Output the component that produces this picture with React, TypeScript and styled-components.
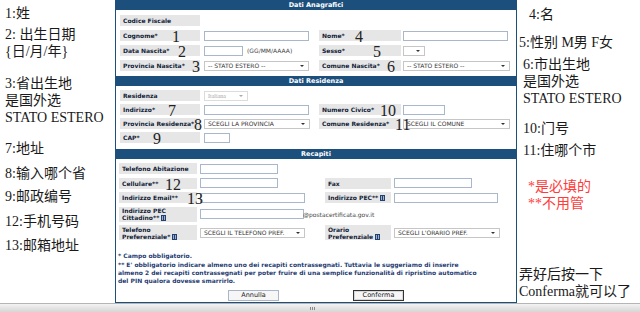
import React from "react";
import styled, { createGlobalStyle } from "styled-components";

const NAVY = "#1d4f7c";

const GlobalStyle = createGlobalStyle`
  html, body { margin: 0; padding: 0; background: #fff; }
  body { width: 640px; height: 312px; overflow: hidden; }
  #root { width: 640px; height: 312px; }
`;

const Page = styled.div`
  width: 640px;
  height: 312px;
  display: flex;
  flex-direction: column;
`;

const Main = styled.div`
  display: flex;
  height: 303px;
`;

const NotesColumn = styled.div<{ $w: number }>`
  width: ${(p) => p.$w}px;
  flex: none;
  font-family: "Liberation Serif", "Noto Sans CJK SC", serif;
  font-size: 14px;
  line-height: 17px;
  white-space: nowrap;
  overflow: hidden;
`;

const Note = styled.div<{ $mt: number; $indent: number; $red?: boolean }>`
  margin-top: ${(p) => p.$mt}px;
  padding-left: ${(p) => p.$indent}px;
  color: ${(p) => (p.$red ? "#ff3b3b" : "#1a1a1a")};
`;

const Frame = styled.div`
  width: 402px;
  flex: none;
  box-sizing: border-box;
  border: 1px solid ${NAVY};
  border-top: none;
  display: flex;
  flex-direction: column;
  font-family: "DejaVu Sans", Verdana, sans-serif;
  font-size: 6px;
`;

const SectionHeader = styled.div`
  height: 10px;
  background: ${NAVY};
  color: #fff;
  font-weight: bold;
  text-align: center;
  line-height: 10px;
  font-size: 6.5px;
`;

const SectionBody = styled.div<{ $pt: number; $pb: number; $pl: number; $gap: number }>`
  display: flex;
  flex-direction: column;
  gap: ${(p) => p.$gap}px;
  padding: ${(p) => p.$pt}px 0 ${(p) => p.$pb}px ${(p) => p.$pl}px;
`;

const Row = styled.div<{ $h: number }>`
  display: flex;
  height: ${(p) => p.$h}px;
`;

const Half = styled.div<{ $w?: number; $gap: number }>`
  display: flex;
  align-items: center;
  gap: ${(p) => p.$gap}px;
  flex: none;
  width: ${(p) => (p.$w ? `${p.$w}px` : "auto")};
`;

const Label = styled.div<{ $w: number }>`
  position: relative;
  align-self: stretch;
  width: ${(p) => p.$w}px;
  flex: none;
  box-sizing: border-box;
  background: #e6e6e6;
  padding-left: 3px;
  display: flex;
  flex-direction: column;
  justify-content: center;
  font-weight: bold;
  color: #121d38;
  line-height: 7px;
  white-space: nowrap;
`;

const Num = styled.span<{ $left: number }>`
  position: absolute;
  left: ${(p) => p.$left}px;
  top: -1px;
  font-family: "Liberation Serif", serif;
  font-weight: normal;
  font-size: 16px;
  line-height: 16px;
  color: #222;
`;

const InfoBox = styled.span`
  display: inline-block;
  box-sizing: border-box;
  width: 5px;
  height: 6px;
  margin-left: 2px;
  vertical-align: -1px;
  border: 1px solid #23406e;
  background: linear-gradient(90deg, #9db0cf 0 40%, #23406e 40% 60%, #9db0cf 60%);
`;

const TextBox = styled.input<{ $w: number }>`
  box-sizing: border-box;
  width: ${(p) => p.$w}px;
  height: 10px;
  margin: 0;
  padding: 0;
  border: 1px solid #a9b7ca;
  background: #fff;
  font-size: 6px;
  flex: none;
  outline: none;
`;

const SelectBox = styled.div<{ $w: number; $disabled?: boolean }>`
  box-sizing: border-box;
  width: ${(p) => p.$w}px;
  height: 10px;
  flex: none;
  border: 1px solid ${(p) => (p.$disabled ? "#dcdcdc" : "#c6c6c6")};
  background: #fff;
  display: flex;
  align-items: center;
  justify-content: space-between;
  padding: 0 4px 0 3px;
  font-size: 6px;
  color: ${(p) => (p.$disabled ? "#a8a8a8" : "#333")};
  font-family: ${(p) => (p.$disabled ? `"Liberation Serif", serif` : `"DejaVu Sans", sans-serif`)};
  white-space: nowrap;
`;

const Arrow = styled.span<{ $disabled?: boolean }>`
  width: 0;
  height: 0;
  border-left: 2px solid transparent;
  border-right: 2px solid transparent;
  border-top: 2px solid ${(p) => (p.$disabled ? "#aaa" : "#333")};
`;

const FieldGroup = styled.div`
  display: flex;
  align-items: center;
  white-space: nowrap;
`;

const Hint = styled.span<{ $ml: number }>`
  margin-left: ${(p) => p.$ml}px;
  color: #444;
  font-size: 6px;
`;

const FootNotes = styled.div`
  padding-left: 2px;
  color: #1f3d73;
  font-weight: bold;
  font-size: 6px;
  line-height: 8px;
  white-space: nowrap;
`;

const FootLine = styled.div<{ $mt: number }>`
  margin-top: ${(p) => p.$mt}px;
`;

const ButtonRow = styled.div`
  display: flex;
  justify-content: center;
  gap: 74px;
  margin-top: 5px;
`;

const Button = styled.button<{ $primary?: boolean }>`
  width: 51px;
  height: 11px;
  box-sizing: border-box;
  padding: 0;
  margin: 0;
  border: 1px solid ${(p) => (p.$primary ? "#333" : "#a7b6c9")};
  box-shadow: ${(p) => (p.$primary ? "inset 0 0 0 1px #d8d8d8" : "none")};
  background: #f6f6f6;
  font-family: "DejaVu Sans", sans-serif;
  font-size: 6.5px;
  line-height: 9px;
  color: #222;
`;

const HScroll = styled.div`
  height: 9px;
  box-sizing: border-box;
  border-top: 1px solid #b5b5b5;
  background: linear-gradient(#f3f3f3, #d6d6d6);
  display: flex;
  justify-content: center;
  align-items: center;
  padding-right: 16px;
`;

const Grip = styled.div`
  width: 5px;
  height: 3px;
  background: repeating-linear-gradient(90deg, #8a8a8a 0 1px, transparent 1px 2px);
`;

const Select = ({ w, text, disabled }: { w: number; text?: string; disabled?: boolean }) => (
  <SelectBox $w={w} $disabled={disabled}>
    <span>{text}</span>
    <Arrow $disabled={disabled} />
  </SelectBox>
);

export default function App() {
  return (
    <Page>
      <GlobalStyle />
      <Main>
        <NotesColumn $w={115}>
          <Note $mt={4.5} $indent={5}>1:姓</Note>
          <Note $mt={4} $indent={5}>
            2: 出生日期
            <br />
            {"{日/月/年}"}
          </Note>
          <Note $mt={15} $indent={5}>
            3:省出生地
            <br />
            是国外选
            <br />
            STATO ESTERO
          </Note>
          <Note $mt={14} $indent={5}>7:地址</Note>
          <Note $mt={8} $indent={5}>8:输入哪个省</Note>
          <Note $mt={6} $indent={5}>9:邮政编号</Note>
          <Note $mt={8} $indent={5}>12:手机号码</Note>
          <Note $mt={7} $indent={5}>13:邮箱地址</Note>
        </NotesColumn>

        <Frame>
          <SectionHeader>Dati Anagrafici</SectionHeader>
          <SectionBody $pt={5} $pb={5} $pl={4} $gap={4}>
            <Row $h={11}>
              <Half $w={199} $gap={4}>
                <Label $w={80}>Codice Fiscale</Label>
              </Half>
            </Row>
            <Row $h={11}>
              <Half $w={199} $gap={4}>
                <Label $w={80}>
                  Cognome*<Num $left={52}>1</Num>
                </Label>
                <TextBox $w={105} />
              </Half>
              <Half $gap={2}>
                <Label $w={82}>
                  Nome*<Num $left={36}>4</Num>
                </Label>
                <TextBox $w={105} />
              </Half>
            </Row>
            <Row $h={11}>
              <Half $w={199} $gap={4}>
                <Label $w={80}>
                  Data Nascita*<Num $left={58}>2</Num>
                </Label>
                <FieldGroup>
                  <TextBox $w={39} />
                  <Hint $ml={4}>(GG/MM/AAAA)</Hint>
                </FieldGroup>
              </Half>
              <Half $gap={2}>
                <Label $w={82}>
                  Sesso*<Num $left={54}>5</Num>
                </Label>
                <Select w={22} />
              </Half>
            </Row>
            <Row $h={11}>
              <Half $w={199} $gap={4}>
                <Label $w={80}>
                  Provincia Nascita*<Num $left={72}>3</Num>
                </Label>
                <Select w={105} text="-- STATO ESTERO --" />
              </Half>
              <Half $gap={2}>
                <Label $w={82}>
                  Comune Nascita*<Num $left={68}>6</Num>
                </Label>
                <Select w={107} text="-- STATO ESTERO --" />
              </Half>
            </Row>
          </SectionBody>

          <SectionHeader>Dati Residenza</SectionHeader>
          <SectionBody $pt={4} $pb={6} $pl={4} $gap={3}>
            <Row $h={11}>
              <Half $w={199} $gap={4}>
                <Label $w={80}>Residenza</Label>
                <Select w={44} text="Italiana" disabled />
              </Half>
            </Row>
            <Row $h={11}>
              <Half $w={199} $gap={4}>
                <Label $w={80}>
                  Indirizzo*<Num $left={48}>7</Num>
                </Label>
                <TextBox $w={105} />
              </Half>
              <Half $gap={2}>
                <Label $w={82}>
                  Numero Civico*<Num $left={61}>10</Num>
                </Label>
                <TextBox $w={42} />
              </Half>
            </Row>
            <Row $h={11}>
              <Half $w={199} $gap={4}>
                <Label $w={80}>
                  Provincia Residenza*<Num $left={74}>8</Num>
                </Label>
                <Select w={106} text="SCEGLI LA PROVINCIA" />
              </Half>
              <Half $gap={2}>
                <Label $w={82}>
                  Comune Residenza*<Num $left={76}>11</Num>
                </Label>
                <Select w={107} text="SCEGLI IL COMUNE" />
              </Half>
            </Row>
            <Row $h={11}>
              <Half $w={199} $gap={4}>
                <Label $w={80}>
                  CAP*<Num $left={33}>9</Num>
                </Label>
                <TextBox $w={26} />
              </Half>
            </Row>
          </SectionBody>

          <SectionHeader>Recapiti</SectionHeader>
          <SectionBody $pt={4} $pb={0} $pl={3} $gap={3.5}>
            <Row $h={11}>
              <Half $w={206} $gap={3}>
                <Label $w={78}>Telefono Abitazione</Label>
                <TextBox $w={78} />
              </Half>
            </Row>
            <Row $h={11}>
              <Half $w={206} $gap={3}>
                <Label $w={78}>
                  Cellulare**<Num $left={46}>12</Num>
                </Label>
                <TextBox $w={78} />
              </Half>
              <Half $gap={3}>
                <Label $w={66}>Fax</Label>
                <TextBox $w={78} />
              </Half>
            </Row>
            <Row $h={11}>
              <Half $w={206} $gap={3}>
                <Label $w={78}>
                  Indirizzo Email**<Num $left={68}>13</Num>
                </Label>
                <TextBox $w={105} />
              </Half>
              <Half $gap={3}>
                <Label $w={66}>
                  <span>
                    Indirizzo PEC**
                    <InfoBox />
                  </span>
                </Label>
                <TextBox $w={104} />
              </Half>
            </Row>
            <Row $h={15}>
              <Half $w={206} $gap={3}>
                <Label $w={78}>
                  <span>Indirizzo PEC</span>
                  <span>
                    Cittadino**
                    <InfoBox />
                  </span>
                </Label>
                <FieldGroup>
                  <TextBox $w={104} />
                  <Hint $ml={-1}>@postacertificata.gov.it</Hint>
                </FieldGroup>
              </Half>
            </Row>
            <Row $h={15}>
              <Half $w={206} $gap={3}>
                <Label $w={78}>
                  <span>Telefono</span>
                  <span>
                    Preferenziale*
                    <InfoBox />
                  </span>
                </Label>
                <Select w={105} text="SCEGLI IL TELEFONO PREF." />
              </Half>
              <Half $gap={3}>
                <Label $w={66}>
                  <span>Orario</span>
                  <span>
                    Preferenziale
                    <InfoBox />
                  </span>
                </Label>
                <Select w={106} text="SCEGLI L'ORARIO PREF." />
              </Half>
            </Row>
          </SectionBody>

          <FootNotes>
            <FootLine $mt={12}>* Campo obbligatorio.</FootLine>
            <FootLine $mt={1}>
              ** E' obbligatorio indicare almeno uno dei recapiti contrassegnati. Tuttavia le suggeriamo di inserire
              <br />
              almeno 2 dei recapiti contrassegnati per poter fruire di una semplice funzionalità di ripristino automatico
              <br />
              del PIN qualora dovesse smarrirlo.
            </FootLine>
          </FootNotes>
          <ButtonRow>
            <Button type="button">Annulla</Button>
            <Button type="button" $primary>
              Conferma
            </Button>
          </ButtonRow>
        </Frame>

        <NotesColumn $w={123}>
          <Note $mt={5.5} $indent={12}>4:名</Note>
          <Note $mt={11} $indent={2}>5:性别 M男 F女</Note>
          <Note $mt={5} $indent={6}>
            6:市出生地
            <br />
            是国外选
            <br />
            STATO ESTERO
          </Note>
          <Note $mt={13} $indent={6}>10:门号</Note>
          <Note $mt={5} $indent={6}>11:住哪个市</Note>
          <Note $mt={19} $indent={11} $red>
            *是必填的
            <br />
            **不用管
          </Note>
          <Note $mt={54} $indent={2}>
            弄好后按一下
            <br />
            Conferma就可以了
          </Note>
        </NotesColumn>
      </Main>
      <HScroll>
        <Grip />
      </HScroll>
    </Page>
  );
}
